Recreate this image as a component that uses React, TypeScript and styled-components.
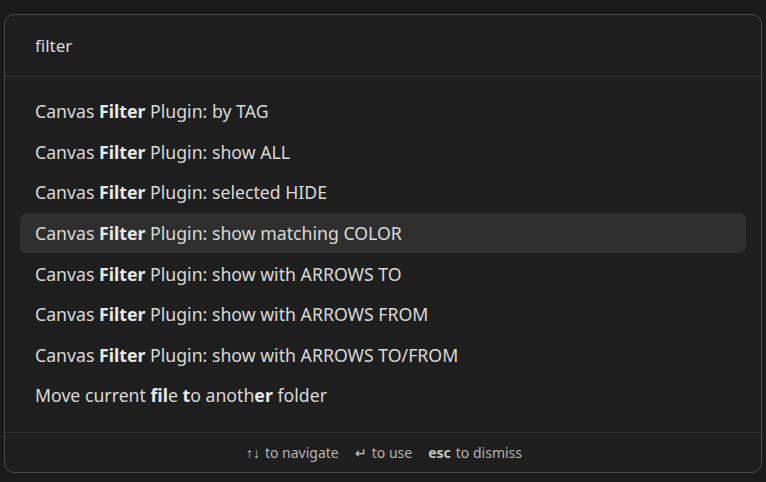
import styled, {createGlobalStyle} from "styled-components";

const GlobalStyle = createGlobalStyle`
  html, body {
    margin: 0;
    padding: 0;
    background: #1b1b1b;
  }
  body {
    font-family: "Noto Sans", "Open Sans", sans-serif;
  }
`

type Part = { text: string; bold?: boolean };

const results: Part[][] = [
    [{text: "Canvas "}, {text: "Filter", bold: true}, {text: " Plugin: by TAG"}],
    [{text: "Canvas "}, {text: "Filter", bold: true}, {text: " Plugin: show ALL"}],
    [{text: "Canvas "}, {text: "Filter", bold: true}, {text: " Plugin: selected HIDE"}],
    [{text: "Canvas "}, {text: "Filter", bold: true}, {text: " Plugin: show matching COLOR"}],
    [{text: "Canvas "}, {text: "Filter", bold: true}, {text: " Plugin: show with ARROWS TO"}],
    [{text: "Canvas "}, {text: "Filter", bold: true}, {text: " Plugin: show with ARROWS FROM"}],
    [{text: "Canvas "}, {text: "Filter", bold: true}, {text: " Plugin: show with ARROWS TO/FROM"}],
    [
        {text: "Move current "},
        {text: "fil", bold: true},
        {text: "e "},
        {text: "t", bold: true},
        {text: "o anoth"},
        {text: "er", bold: true},
        {text: " folder"},
    ],
];

const SELECTED = 3;

const App = () => {
    return (
        <Page>
            <GlobalStyle/>
            <Palette>
                <SearchRow>
                    <SearchInput defaultValue="filter" spellCheck={false}/>
                </SearchRow>
                <ResultList>
                    {results.map((parts, i) => (
                        <ResultItem key={i} $selected={i === SELECTED}>
                            {parts.map((p, j) =>
                                p.bold ? <Match key={j}>{p.text}</Match> : <span key={j}>{p.text}</span>
                            )}
                        </ResultItem>
                    ))}
                </ResultList>
                <Instructions>
                    <Instruction><Key>↑↓</Key> to navigate</Instruction>
                    <Instruction><Key>↵</Key> to use</Instruction>
                    <Instruction><Key $bold>esc</Key> to dismiss</Instruction>
                </Instructions>
            </Palette>
        </Page>
    );
};

const Page = styled.div`
  width: 766px;
  height: 482px;
  box-sizing: border-box;
  padding: 14px 4px 0 4px;
  overflow: hidden;
  background: #1b1b1b;
`

const Palette = styled.div`
  width: 758px;
  height: 459px;
  box-sizing: border-box;
  border: 1px solid #4a4a4a;
  border-radius: 10px;
  background: #1f1f1f;
  display: flex;
  flex-direction: column;
  overflow: hidden;
`

const SearchRow = styled.div`
  height: 62px;
  box-sizing: border-box;
  border-bottom: 1px solid #2e2e2e;
  display: flex;
  align-items: center;
  padding: 0 30px;
`

const SearchInput = styled.input`
  width: 100%;
  background: transparent;
  border: 0;
  outline: none;
  color: #dadada;
  font-family: "Noto Sans", sans-serif;
  font-size: 17px;
  padding: 0;
  margin-top: -1px;
`

const ResultList = styled.div`
  flex: 1;
  padding: 14px 15px 0 15px;
  display: flex;
  flex-direction: column;
`

const ResultItem = styled.div<{ $selected: boolean }>`
  height: 40.6px;
  flex-shrink: 0;
  display: flex;
  align-items: center;
  padding: 0 15px;
  border-radius: 6px;
  white-space: pre;
  font-size: 17.7px;
  color: #d9d9d9;
  background: ${({$selected}) => ($selected ? "#2f2f2f" : "transparent")};
`

const Match = styled.span`
  font-weight: 700;
  color: #e8e8e8;
`

const Instructions = styled.div`
  height: 39px;
  border-top: 1px solid #2e2e2e;
  display: flex;
  justify-content: center;
  align-items: center;
  gap: 16px;
  font-size: 14px;
  color: #b4b4b4;
  padding-left: 2px;
`

const Instruction = styled.div`
  display: flex;
  align-items: center;
  gap: 5px;
`

const Key = styled.span<{ $bold?: boolean }>`
  font-weight: ${({$bold}) => ($bold ? 700 : 400)};
  color: #c4c4c4;
`

export default App;
